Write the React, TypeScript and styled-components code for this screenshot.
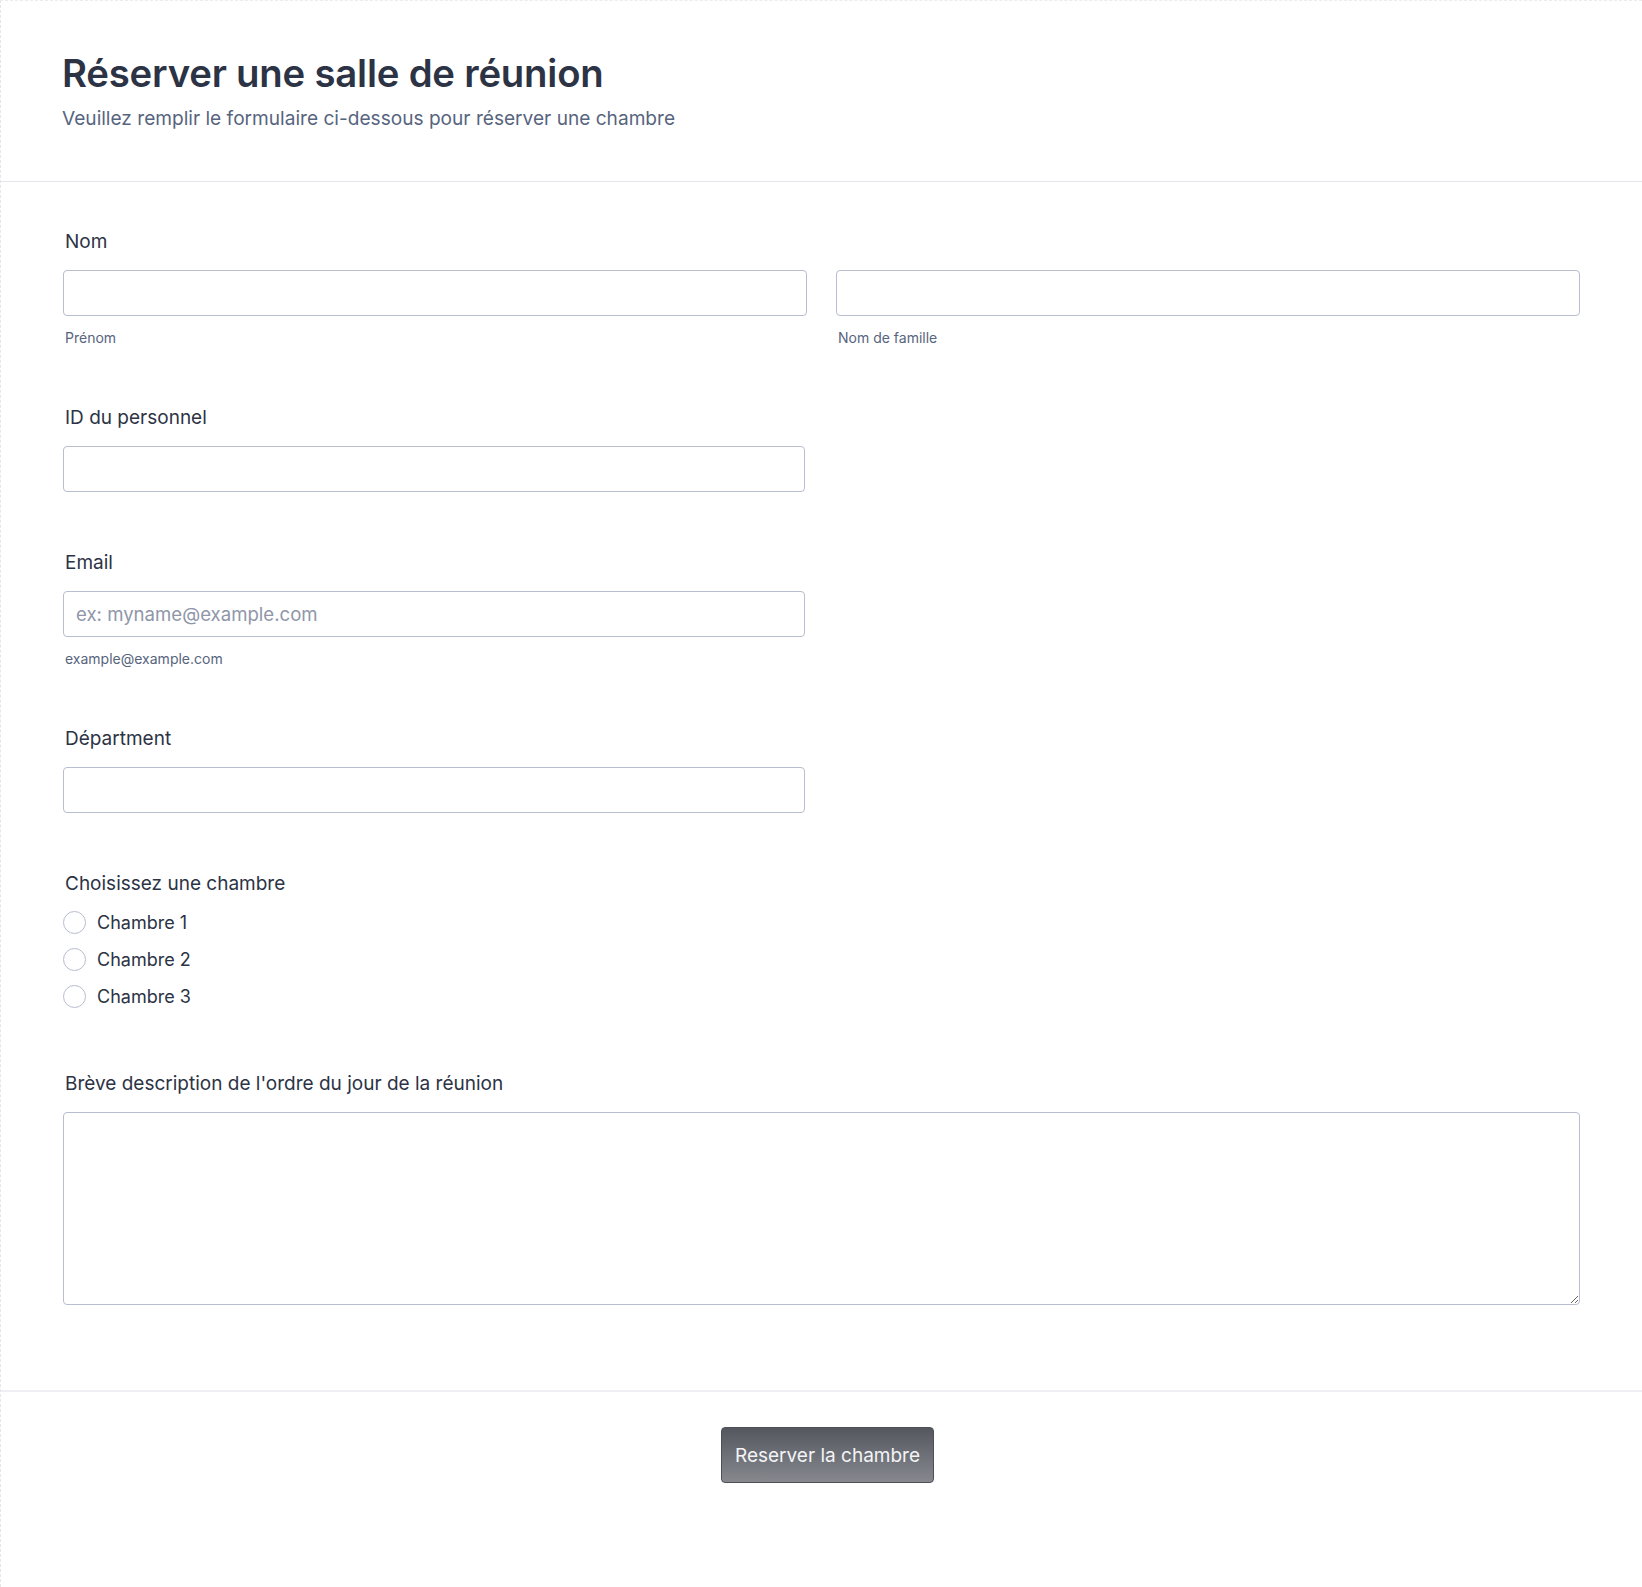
import React from 'react';
import styled, { createGlobalStyle } from 'styled-components';

const GlobalStyle = createGlobalStyle`
  html, body {
    margin: 0;
    padding: 0;
    background: #ffffff;
  }
  body {
    font-family: 'Inter', 'Noto Sans', sans-serif;
    color: #2c3345;
  }
`;

const Page = styled.div`
  width: 1642px;
  min-height: 1587px;
  box-sizing: border-box;
  border-left: 1px dashed #e6e6ea;
  border-top: 1px dashed #ececef;
  background: #ffffff;
`;

const Header = styled.header`
  padding: 48px 62px 50px 61px;
  border-bottom: 1px solid #e3e5ea;
`;

const Title = styled.h1`
  margin: 0;
  font-size: 38.3px;
  line-height: 48px;
  font-weight: 600;
  color: #2c3345;
  letter-spacing: -0.2px;
`;

const Subtitle = styled.p`
  margin: 8px 0 0;
  font-size: 19.1px;
  line-height: 26px;
  color: #57647e;
`;

const Body = styled.form`
  padding: 47px 62px 0;
`;

const Field = styled.div<{ $wide?: boolean; $gap?: number }>`
  width: ${(p) => (p.$wide ? '100%' : '742px')};
  margin-bottom: ${(p) => (p.$gap ?? 58)}px;
`;

const Label = styled.label`
  display: block;
  font-size: 19px;
  line-height: 26px;
  color: #2c3345;
  padding-left: 2px;
  margin-bottom: 15px;
`;

const Row = styled.div`
  display: grid;
  grid-template-columns: 1fr 1fr;
  column-gap: 29px;
`;

const Input = styled.input`
  display: block;
  width: 100%;
  height: 46px;
  box-sizing: border-box;
  border: 1px solid #b8bdcf;
  border-radius: 4px;
  padding: 0 12px;
  font-family: 'Inter', 'Noto Sans', sans-serif;
  font-size: 18.6px;
  color: #2c3345;
  background: #ffffff;
  outline: none;

  &::placeholder {
    color: #8f96a8;
  }
`;

const SubLabel = styled.span`
  display: block;
  margin-top: 13px;
  padding-left: 2px;
  font-size: 14px;
  line-height: 18px;
  color: #57647e;
`;

const RadioList = styled.div`
  display: flex;
  flex-direction: column;
  margin-top: -8px;
`;

const RadioRow = styled.label`
  display: flex;
  align-items: center;
  height: 37px;
  font-size: 18px;
  color: #2c3345;
  cursor: pointer;
`;

const RadioCircle = styled.span`
  width: 23px;
  height: 23px;
  box-sizing: border-box;
  border: 1px solid #b8bdcf;
  border-radius: 50%;
  background: #ffffff;
  margin-right: 11px;
  flex-shrink: 0;
`;

const TextArea = styled.textarea`
  display: block;
  width: 100%;
  height: 193px;
  box-sizing: border-box;
  border: 1px solid #b8bdcf;
  border-radius: 4px;
  padding: 10px 12px;
  font-family: 'Inter', 'Noto Sans', sans-serif;
  font-size: 18px;
  resize: vertical;
  outline: none;
`;

const Footer = styled.div`
  margin-top: 85px;
  border-top: 2px solid #eeeef3;
  padding-top: 35px;
  display: flex;
  justify-content: center;
`;

const SubmitButton = styled.button`
  width: 213px;
  height: 56px;
  box-sizing: border-box;
  border: 1px solid #4d5057;
  border-radius: 4px;
  background: linear-gradient(180deg, #55575e 0%, #6d7077 50%, #86888e 100%);
  color: #f4f4f6;
  font-family: 'Inter', 'Noto Sans', sans-serif;
  font-size: 19px;
  cursor: pointer;
  margin-left: 12px;
`;

const rooms = ['Chambre 1', 'Chambre 2', 'Chambre 3'];

export default function App() {
  return (
    <>
      <GlobalStyle />
      <Page>
        <Header>
          <Title>Réserver une salle de réunion</Title>
          <Subtitle>Veuillez remplir le formulaire ci-dessous pour réserver une chambre</Subtitle>
        </Header>
        <Body onSubmit={(e) => e.preventDefault()}>
          <Field $wide>
            <Label>Nom</Label>
            <Row>
              <div>
                <Input type="text" />
                <SubLabel>Prénom</SubLabel>
              </div>
              <div>
                <Input type="text" />
                <SubLabel>Nom de famille</SubLabel>
              </div>
            </Row>
          </Field>

          <Field>
            <Label>ID du personnel</Label>
            <Input type="text" />
          </Field>

          <Field>
            <Label>Email</Label>
            <Input type="email" placeholder="ex: myname@example.com" />
            <SubLabel>example@example.com</SubLabel>
          </Field>

          <Field>
            <Label>Départment</Label>
            <Input type="text" />
          </Field>

          <Field $gap={56}>
            <Label>Choisissez une chambre</Label>
            <RadioList>
              {rooms.map((r) => (
                <RadioRow key={r}>
                  <RadioCircle />
                  {r}
                </RadioRow>
              ))}
            </RadioList>
          </Field>

          <Field $wide $gap={0}>
            <Label>Brève description de l'ordre du jour de la réunion</Label>
            <TextArea />
          </Field>
        </Body>
        <Footer>
          <SubmitButton type="submit">Reserver la chambre</SubmitButton>
        </Footer>
      </Page>
    </>
  );
}
